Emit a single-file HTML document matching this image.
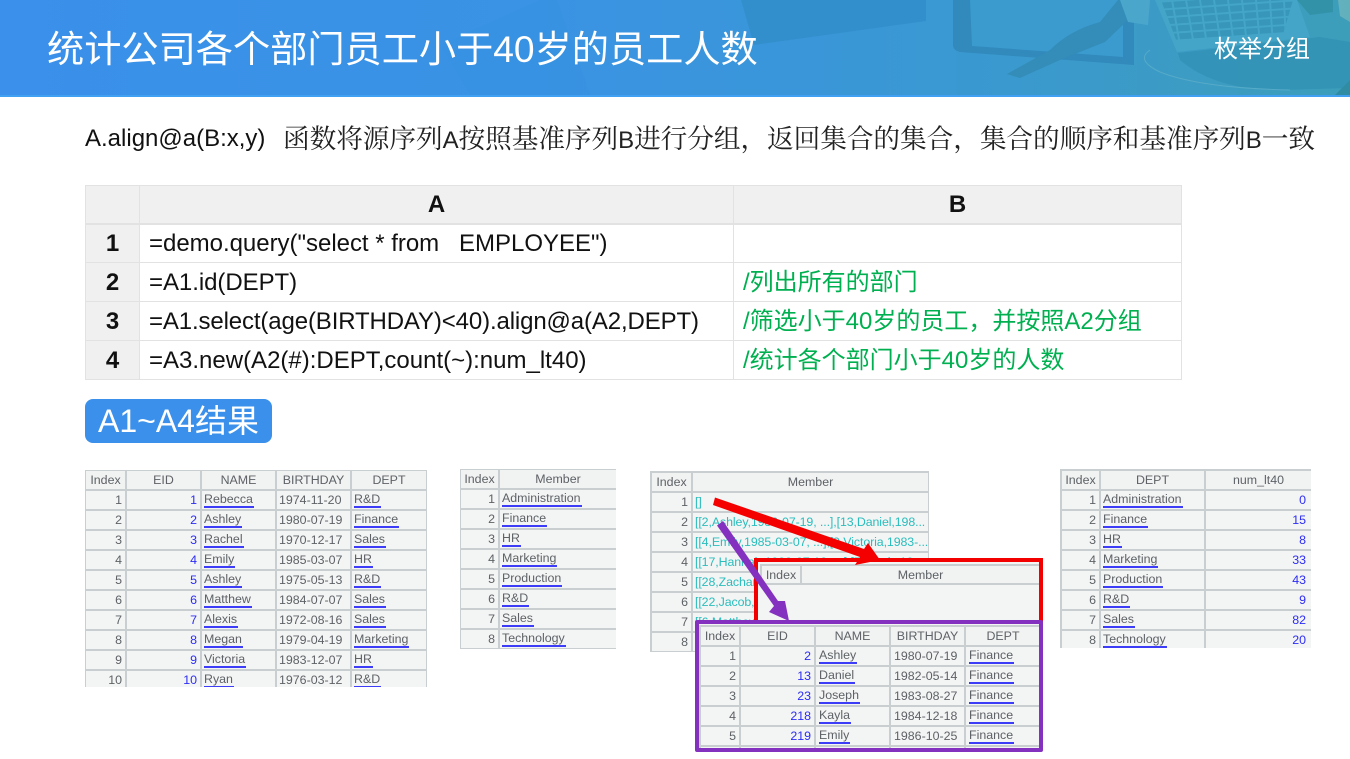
<!DOCTYPE html>
<html lang="zh"><head><meta charset="utf-8"><title>枚举分组</title>
<style>
html,body{margin:0;padding:0;background:#fff}
body{width:1350px;height:759px;position:relative;overflow:hidden;font-family:"Liberation Sans","Noto Sans CJK SC",sans-serif}
.abs{position:absolute}
#hd{left:0;top:0;width:1350px;height:97px;overflow:hidden}
.main{position:absolute;left:85px;top:185px;border-collapse:collapse;table-layout:fixed;width:1096px;font-size:24px;line-height:30px;color:#111}
.main td{border:1px solid #e2e2e2;height:39px;padding:2px 0 0 9px;box-sizing:border-box;white-space:pre;overflow:hidden}
.main tr:first-child td{background:#f0f0f0;text-align:center;font-weight:bold;padding:2px 0 0;height:38px;border-bottom:2px solid #e2e2e2}
.main td:first-child{background:#f0f0f0;text-align:center;font-weight:bold;padding:2px 0 0}
.g{color:#00b050}
.tb{position:absolute;overflow:hidden;background:#f3f4f4}
.tb table{border-collapse:collapse;table-layout:fixed;font-size:12.4px;color:#5e6266}
.tb td{border:2px solid #c9ced0;height:20px;padding:0 3px 0 2px;box-sizing:border-box;white-space:nowrap;overflow:hidden;line-height:14px}
.tb tr:first-child td{text-align:center;background:#f1f2f2;padding:0}
.r{text-align:right}
.b{color:#2c2cf6;text-align:right}
u{text-decoration:none;display:inline-block;border-bottom:2px solid #3d3df8;line-height:14px;padding:0 1px 0 0}
.t{color:#2bbdbd;letter-spacing:-.1px}
.blur{filter:blur(.3px)}
.m1{margin:-1px 0 0 -1px}
.p3 td{padding-left:3px}
.rp .b{padding-right:5px}
</style></head><body>

<div id="hd" class="abs">
<svg width="1350" height="97" viewBox="0 0 1350 97" style="position:absolute;left:0;top:0">
<defs><linearGradient id="bg" x1="0" x2="1" y1="0" y2="0">
<stop offset="0" stop-color="#3a90ea"/><stop offset=".4" stop-color="#3a93e4"/><stop offset=".7" stop-color="#3a98d2"/><stop offset="1" stop-color="#3d9eba"/></linearGradient>
<clipPath id="keys"><path d="M1161 0H1293L1283 34L1177 42Z"/></clipPath></defs>
<rect width="1350" height="97" fill="url(#bg)"/>
<path d="M540 0L557 0L590 95L470 95L440 45Z" fill="#3389db" opacity=".12"/>
<path d="M741 0H926V21L754 45Z" fill="#338fcc"/>
<path d="M953 0H1134V65L960 52Q953 50 953 45Z" fill="#3189bc"/>
<path d="M970 0H1123V57L972 46Z" fill="#3b9bce"/>
<path d="M1007 74L1050 50Q1070 30 1100 22L1118 0H1150L1128 20L1105 42L1060 60L1020 78Z" fill="#338db8"/>
<path d="M1120 0H1150L1148 25L1128 22Z" fill="#4ba6cc"/>
<path d="M1155 0H1297L1310 37L1177 52Z" fill="#44a5c8"/>
<g clip-path="url(#keys)"><path d="M1155 6L1300 -4M1155 14L1300 4M1155 22L1300 12M1155 30L1300 20M1155 38L1300 28" stroke="#3796ba" stroke-width="6"/>
<path d="M1172 0L1180 45M1186 0L1194 45M1200 0L1207 45M1214 0L1221 45M1228 0L1234 45M1242 0L1247 45M1256 0L1260 45M1270 0L1273 45M1284 0L1286 45" stroke="#44a5c8" stroke-width="2"/></g>
<path d="M1178 53L1320 37L1350 42V88L1280 90Q1215 90 1180 60Z" fill="#3190b3" opacity=".7"/>
<path d="M1150 50Q1135 60 1160 72Q1200 88 1290 90" fill="none" stroke="#55aac8" stroke-width="1"/>
<path d="M1297 0H1333V12L1310 15Z" fill="#3292a8"/>
<path d="M1338 0H1350V22L1340 16Z" fill="#7dbdc0" opacity=".6"/>
<path d="M1335 95L1350 80V97Z" fill="#308ca2"/>
<rect y="95" width="1350" height="2" fill="#42a0f2"/>
</svg>
<div class="abs" style="left:47px;top:24px;font-size:37.2px;line-height:50px;color:#fff;white-space:nowrap">统计公司各个部门员工小于40岁的员工人数</div>
<div class="abs" style="left:1214px;top:33px;font-size:24px;line-height:34px;color:#fff;white-space:nowrap">枚举分组</div>
</div>

<div class="abs" style="left:85px;top:120px;font-size:24px;line-height:38px;color:#111;white-space:nowrap">A.align@a(B:x,y)</div>
<div class="abs" style="left:283px;top:120px;font-size:26.67px;line-height:38px;color:#222;white-space:nowrap;font-family:'Liberation Sans','Noto Serif CJK SC',serif;letter-spacing:-.06px">函数将源序列<span style="font-size:24px">A</span>按照基准序列<span style="font-size:24px">B</span>进行分组，返回集合的集合，集合的顺序和基准序列<span style="font-size:24px">B</span>一致</div>

<table class="main">
<colgroup><col style="width:54px"><col style="width:594px"><col style="width:448px"></colgroup>
<tr><td></td><td>A</td><td>B</td></tr>
<tr><td>1</td><td style="letter-spacing:-.02px">=demo.query("select * from   EMPLOYEE")</td><td></td></tr>
<tr><td>2</td><td style="letter-spacing:-.05px">=A1.id(DEPT)</td><td class="g">/列出所有的部门</td></tr>
<tr><td>3</td><td style="letter-spacing:-.13px">=A1.select(age(BIRTHDAY)&lt;40).align@a(A2,DEPT)</td><td class="g">/筛选小于40岁的员工，并按照A2分组</td></tr>
<tr><td>4</td><td style="letter-spacing:0">=A3.new(A2(#):DEPT,count(~):num_lt40)</td><td class="g">/统计各个部门小于40岁的人数</td></tr>
</table>

<div class="abs" style="left:85px;top:399px;width:187px;height:44px;background:#3a90ea;border-radius:8px;color:#fff;font-size:32px;line-height:44px;text-align:center;white-space:nowrap">A1~A4结果</div>

<div class="tb blur" style="left:85px;top:470px;width:342px;height:217px">
<table class="m1" style="width:342px"><colgroup><col style="width:41px"><col style="width:75px"><col style="width:75px"><col style="width:75px"><col style="width:76px"></colgroup>
<tr><td>Index</td><td>EID</td><td>NAME</td><td>BIRTHDAY</td><td>DEPT</td></tr>
<tr><td class="r">1</td><td class="b">1</td><td><u>Rebecca</u></td><td>1974-11-20</td><td><u>R&amp;D</u></td></tr>
<tr><td class="r">2</td><td class="b">2</td><td><u>Ashley</u></td><td>1980-07-19</td><td><u>Finance</u></td></tr>
<tr><td class="r">3</td><td class="b">3</td><td><u>Rachel</u></td><td>1970-12-17</td><td><u>Sales</u></td></tr>
<tr><td class="r">4</td><td class="b">4</td><td><u>Emily</u></td><td>1985-03-07</td><td><u>HR</u></td></tr>
<tr><td class="r">5</td><td class="b">5</td><td><u>Ashley</u></td><td>1975-05-13</td><td><u>R&amp;D</u></td></tr>
<tr><td class="r">6</td><td class="b">6</td><td><u>Matthew</u></td><td>1984-07-07</td><td><u>Sales</u></td></tr>
<tr><td class="r">7</td><td class="b">7</td><td><u>Alexis</u></td><td>1972-08-16</td><td><u>Sales</u></td></tr>
<tr><td class="r">8</td><td class="b">8</td><td><u>Megan</u></td><td>1979-04-19</td><td><u>Marketing</u></td></tr>
<tr><td class="r">9</td><td class="b">9</td><td><u>Victoria</u></td><td>1983-12-07</td><td><u>HR</u></td></tr>
<tr><td class="r">10</td><td class="b">10</td><td><u>Ryan</u></td><td>1976-03-12</td><td><u>R&amp;D</u></td></tr>
</table></div>

<div class="tb blur" style="left:460px;top:469px;width:156px;height:180px">
<table class="m1" style="width:157px"><colgroup><col style="width:39px"><col style="width:118px"></colgroup>
<tr><td>Index</td><td>Member</td></tr>
<tr><td class="r">1</td><td><u>Administration</u></td></tr>
<tr><td class="r">2</td><td><u>Finance</u></td></tr>
<tr><td class="r">3</td><td><u>HR</u></td></tr>
<tr><td class="r">4</td><td><u>Marketing</u></td></tr>
<tr><td class="r">5</td><td><u>Production</u></td></tr>
<tr><td class="r">6</td><td><u>R&amp;D</u></td></tr>
<tr><td class="r">7</td><td><u>Sales</u></td></tr>
<tr><td class="r">8</td><td><u>Technology</u></td></tr>
</table></div>

<div class="tb blur" style="left:650px;top:471px;width:279px;height:181px">
<table style="width:278px"><colgroup><col style="width:41px"><col style="width:237px"></colgroup>
<tr><td>Index</td><td>Member</td></tr>
<tr><td class="r">1</td><td class="t">[]</td></tr>
<tr><td class="r">2</td><td class="t">[[2,Ashley,1980-07-19, ...],[13,Daniel,198...</td></tr>
<tr><td class="r">3</td><td class="t">[[4,Emily,1985-03-07, ...],[9,Victoria,1983-...</td></tr>
<tr><td class="r">4</td><td class="t">[[17,Hannah,1990-07-19, ...],[7,Alexis,19...</td></tr>
<tr><td class="r">5</td><td class="t">[[28,Zachary,1990-07-19, ...],[35,Emily,19...</td></tr>
<tr><td class="r">6</td><td class="t">[[22,Jacob,1985-03-07, ...],[31,Kayla,19...</td></tr>
<tr><td class="r">7</td><td class="t">[[6,Matthew,1984-07-07, ...],[3,Rachel,19...</td></tr>
<tr><td class="r">8</td><td class="t">[[12,Brandon,1984-07-07, ...],[21,Ryan,19...</td></tr>
</table></div>

<div class="tb blur rp" style="left:1060px;top:469px;width:251px;height:179px">
<table style="width:251px"><colgroup><col style="width:39px"><col style="width:105px"><col style="width:107px"></colgroup>
<tr><td>Index</td><td>DEPT</td><td>num_lt40</td></tr>
<tr><td class="r">1</td><td><u>Administration</u></td><td class="b">0</td></tr>
<tr><td class="r">2</td><td><u>Finance</u></td><td class="b">15</td></tr>
<tr><td class="r">3</td><td><u>HR</u></td><td class="b">8</td></tr>
<tr><td class="r">4</td><td><u>Marketing</u></td><td class="b">33</td></tr>
<tr><td class="r">5</td><td><u>Production</u></td><td class="b">43</td></tr>
<tr><td class="r">6</td><td><u>R&amp;D</u></td><td class="b">9</td></tr>
<tr><td class="r">7</td><td><u>Sales</u></td><td class="b">82</td></tr>
<tr><td class="r">8</td><td><u>Technology</u></td><td class="b">20</td></tr>
</table></div>

<div class="abs" style="left:754px;top:558px;width:289px;height:70px;box-sizing:border-box;border:4px solid #f20000;background:#fff"></div>
<div class="tb blur" style="left:758px;top:562px;width:281px;height:60px;padding:2px 0 0 2px;box-sizing:border-box">
<table style="width:279px"><colgroup><col style="width:40px"><col style="width:239px"></colgroup>
<tr><td style="height:19px">Index</td><td style="height:19px">Member</td></tr>
</table></div>

<div class="abs" style="left:695px;top:620px;width:348px;height:132px;box-sizing:border-box;border:4px solid #8531c0;border-radius:2px;background:#f3f4f4;z-index:2"></div>
<div class="tb blur" style="left:699px;top:625px;width:340px;height:123px;z-index:3">
<table class="p3" style="width:341px"><colgroup><col style="width:40px"><col style="width:75px"><col style="width:75px"><col style="width:75px"><col style="width:76px"></colgroup>
<tr><td>Index</td><td>EID</td><td>NAME</td><td>BIRTHDAY</td><td>DEPT</td></tr>
<tr><td class="r">1</td><td class="b">2</td><td><u>Ashley</u></td><td>1980-07-19</td><td><u>Finance</u></td></tr>
<tr><td class="r">2</td><td class="b">13</td><td><u>Daniel</u></td><td>1982-05-14</td><td><u>Finance</u></td></tr>
<tr><td class="r">3</td><td class="b">23</td><td><u>Joseph</u></td><td>1983-08-27</td><td><u>Finance</u></td></tr>
<tr><td class="r">4</td><td class="b">218</td><td><u>Kayla</u></td><td>1984-12-18</td><td><u>Finance</u></td></tr>
<tr><td class="r">5</td><td class="b">219</td><td><u>Emily</u></td><td>1986-10-25</td><td><u>Finance</u></td></tr>
<tr><td class="r">6</td><td class="b"></td><td></td><td></td><td></td></tr>
</table></div>

<svg class="abs" style="left:0;top:0;z-index:4" width="1350" height="759" viewBox="0 0 1350 759">
<path d="M715 497.500L864 549L868 543L880 560L855 565L860 557L713 505Z" fill="#f50000"/>
<path d="M723 521L778 601L785 601L789 621L769 612L774 606L717 525.500Z" fill="#8531c0"/>
</svg>
</body></html>
